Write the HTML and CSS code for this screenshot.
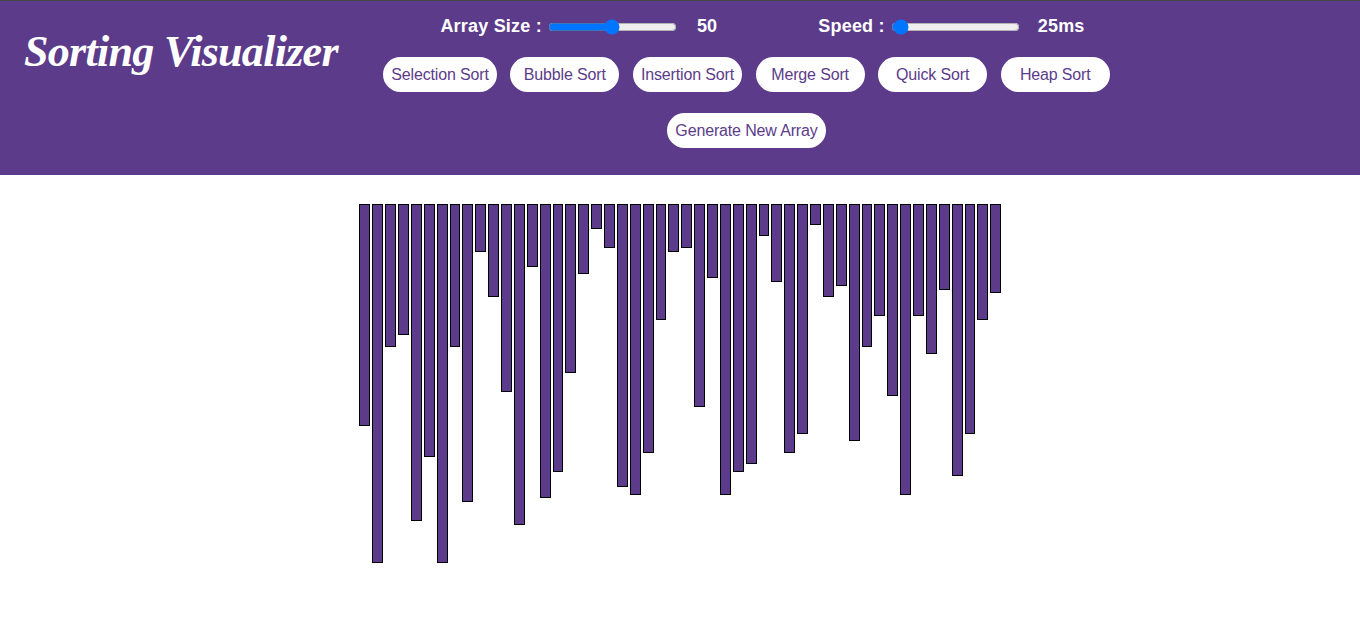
FILE: index.html
```html
<!DOCTYPE html>
<html lang="en">
<head>
  <meta charset="UTF-8">
  <meta name="viewport" content="width=device-width, initial-scale=1.0">
  <title>Sorting Visualizer</title>
  <link rel="stylesheet" href="styles.css">
</head>
<body>
  <header class="header">
    <h1 class="logo">Sorting Visualizer</h1>
    <div class="controls">
      <div class="sliders">
        <div class="slider-group size-group">
          <label for="arraySize">Array Size :</label>
          <input type="range" id="arraySize" min="10" max="90" value="50">
          <span class="value">50</span>
        </div>
        <div class="slider-group speed-group">
          <label for="speed">Speed :</label>
          <input type="range" id="speed" min="20" max="300" value="25">
          <span class="value">25ms</span>
        </div>
      </div>
      <div class="buttons">
        <button>Selection Sort</button>
        <button>Bubble Sort</button>
        <button>Insertion Sort</button>
        <button>Merge Sort</button>
        <button>Quick Sort</button>
        <button>Heap Sort</button>
      </div>
      <div class="buttons">
        <button>Generate New Array</button>
      </div>
    </div>
  </header>

  <main class="chart" id="chart"></main>

  <script src="script.js"></script>
</body>
</html>
```

FILE: styles.css
```css
* {
  box-sizing: border-box;
}
body {
  margin: 0;
  font-family: "Liberation Sans", Arial, sans-serif;
  background-color: white;
}
.header {
  display: flex;
  height: 175px;
  background-color: #5c3c8a;
  border-top: 1px solid #444;
}
.logo {
  width: 360px;
  margin: 0;
  padding: 23px 0 0 24px;
  font-family: "Liberation Serif", cursive;
  font-style: italic;
  font-weight: bold;
  font-size: 44px;
  letter-spacing: -0.7px;
  line-height: 56px;
  white-space: nowrap;
  color: white;
}
.controls {
  width: 773px;
  display: flex;
  flex-direction: column;
  align-items: center;
}
.sliders {
  display: flex;
  height: 50px;
  align-items: center;
  margin-left: 32px;
}
.slider-group {
  display: flex;
  align-items: center;
  font-size: 18px;
  font-weight: bold;
  letter-spacing: 0.2px;
  color: white;
}
.speed-group {
  margin-left: 101px;
}
.slider-group input {
  width: 129px;
  margin: 2px 0 0 6px;
}
.value {
  margin-left: 20px;
}
.speed-group .value {
  margin-left: 18px;
}
.buttons {
  display: flex;
  justify-content: center;
  gap: 13.6px;
  margin-top: 6px;
  margin-bottom: 15px;
}
button {
  min-width: 109px;
  height: 35px;
  padding: 0 8px;
  border: none;
  border-radius: 18px;
  background-color: white;
  color: #5c3c8a;
  font-family: "Liberation Sans", Arial, sans-serif;
  font-size: 16px;
  letter-spacing: -0.15px;
}
.chart {
  display: flex;
  justify-content: center;
  align-items: flex-start;
  padding-top: 29px;
  padding-left: 0.6px;
}
.bar {
  width: 10.875px;
  margin-right: 2px;
  background-color: #5c3c8a;
  border: 1px solid black;
}
.bar:last-child {
  margin-right: 0;
}
```

FILE: script.js
```js
// bar heights for the current array
var heights = [222, 359, 143, 131, 317, 253, 359, 143, 298, 48, 93, 188, 321, 63, 294, 268, 169, 70, 25, 44, 283, 291, 249, 116, 48, 44, 203, 74, 291, 268, 260, 32, 78, 249, 230, 21, 93, 82, 237, 143, 112, 192, 291, 112, 150, 86, 272, 230, 116, 89];

var chart = document.getElementById('chart');
heights.forEach(function(h) {
  var bar = document.createElement('div');
  bar.className = 'bar';
  bar.style.height = h + 'px';
  chart.appendChild(bar);
});
```
